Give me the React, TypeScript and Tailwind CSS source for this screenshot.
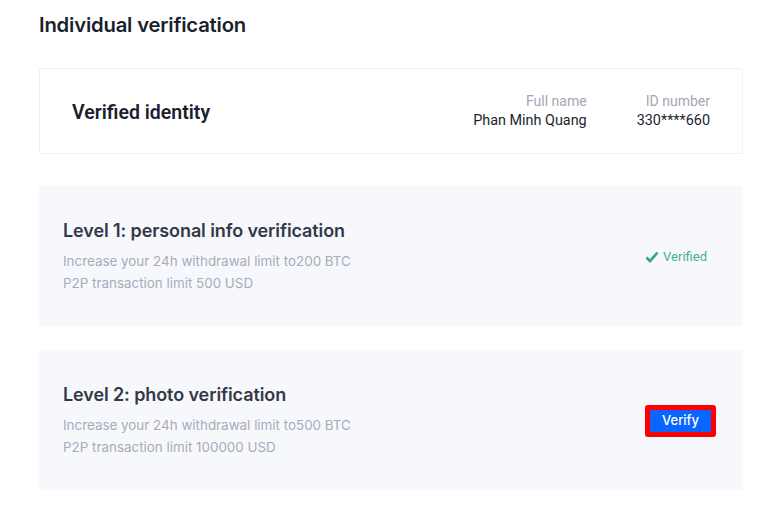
import React from "react";

function Level({ title, l1, l2, right }: { title: string; l1: string; l2: string; right: React.ReactNode }) {
  return (
    <div className="h-[140px] bg-[#f7f8fc] rounded-[2px] flex items-center justify-between pl-6 pr-[27px]">
      <div className="flex flex-col">
        <div className="text-[18px] leading-[26px] font-semibold text-[#333848] font-['Inter',sans-serif] tracking-[-0.1px]">{title}</div>
        <div className="mt-[6px] text-[13.4px] leading-[22px] text-[#a7abbb] font-['Inter',sans-serif]">{l1}</div>
        <div className="text-[13.4px] leading-[22px] text-[#a7abbb] font-['Inter',sans-serif]">{l2}</div>
      </div>
      {right}
    </div>
  );
}

export default function App() {
  return (
    <div className="w-[775px] h-[530px] bg-white pl-[39px] pr-[32px] pt-[12px]">
      <h1 className="text-[20.3px] leading-[26px] font-semibold text-[#1b1f2e] font-['Inter',sans-serif] tracking-[-0.2px]">Individual verification</h1>
      <div className="mt-[30px] h-[86px] border border-[#eef0f4] rounded-[2px] flex items-center justify-between pl-[32px] pr-[32px]">
        <div className="text-[19.5px] font-semibold text-[#1b1f2e] font-['Roboto',sans-serif] mt-[3px]">Verified identity</div>
        <div className="flex gap-[50px] font-['Roboto',sans-serif] text-[14.4px] leading-[20px] text-right">
          <div className="flex flex-col">
            <span className="text-[#a3a7b4] text-[14px]">Full name</span>
            <span className="text-[#1b1f2e]">Phan Minh Quang</span>
          </div>
          <div className="flex flex-col">
            <span className="text-[#a3a7b4] text-[14px]">ID number</span>
            <span className="text-[#1b1f2e]">330****660</span>
          </div>
        </div>
      </div>
      <div className="mt-[32px] flex flex-col gap-[24px]">
        <Level
          title="Level 1: personal info verification"
          l1="Increase your 24h withdrawal limit to200 BTC"
          l2="P2P transaction limit 500 USD"
          right={
            <div className="flex items-center gap-[4px] text-[#3bb58a] text-[13px] font-['Roboto',sans-serif] mr-[9px] mt-[1px]">
              <svg width="14" height="12" viewBox="0 0 14 12">
                <path d="M1.5 6.5 L5 10 L12.5 1.5" fill="none" stroke="#2ea87a" strokeWidth="2.6" strokeLinecap="butt" strokeLinejoin="miter" />
              </svg>
              <span>Verified</span>
            </div>
          }
        />
        <Level
          title="Level 2: photo verification"
          l1="Increase your 24h withdrawal limit to500 BTC"
          l2="P2P transaction limit 100000 USD"
          right={
            <div className="border-[5px] border-[#ff0000] rounded-[3px] mt-[2px]">
              <button className="w-[61px] h-[22px] bg-[#0a66ff] text-white text-[13px] font-medium font-['Inter',sans-serif] flex items-center justify-center">Verify</button>
            </div>
          }
        />
      </div>
    </div>
  );
}
